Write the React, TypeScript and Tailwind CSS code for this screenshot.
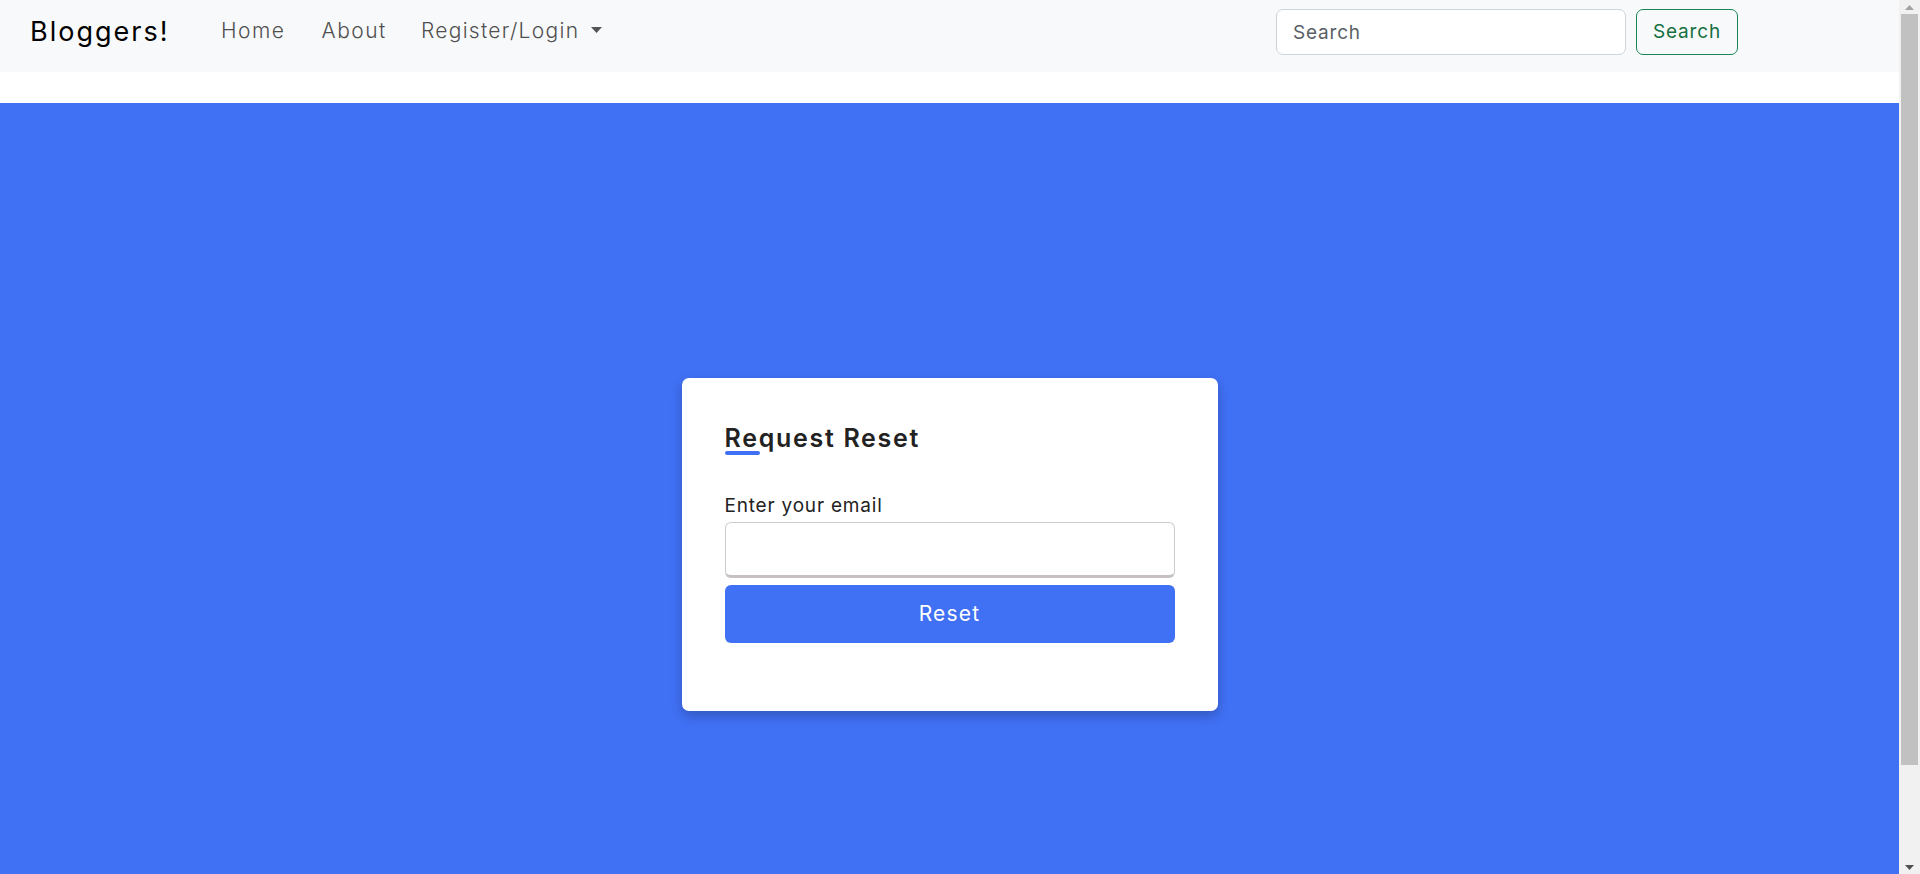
import { useState } from 'react';

function NavBar() {
  const [query, setQuery] = useState('');

  return (
    <nav className="flex items-start h-[72px] shrink-0 bg-[#f8f9fa] pl-[30px] pr-[161px]">
      {/* Brand */}
      <a href="#" className="w-[191px] mt-[18px] text-[27px] leading-none text-black tracking-[2px]">
        Bloggers!
      </a>

      {/* Links */}
      <div className="flex items-start mt-[20px] text-[21px] leading-none font-light text-[#505050] tracking-[1.5px]">
        <a href="#" className="hover:text-black">Home</a>
        <a href="#" className="ml-[36px] hover:text-black">About</a>
        <button className="ml-[34px] flex items-start gap-[12px] hover:text-black tracking-[1.3px]">
          Register/Login
          <svg className="w-[11px] h-[6px] mt-[7px]" viewBox="0 0 11 6" fill="#555">
            <path d="M0 0h11L5.5 6z" />
          </svg>
        </button>
      </div>

      {/* Search */}
      <form className="ml-auto flex gap-[10px] mt-[9px]" onSubmit={(e) => e.preventDefault()}>
        <input
          type="search"
          value={query}
          onChange={(e) => setQuery(e.target.value)}
          placeholder="Search"
          className="w-[350px] h-[46px] rounded-[7px] border border-[#ced4da] bg-white px-[16px] text-[19px] tracking-[0.8px] text-[#212529] placeholder:text-[#5a5f66] outline-none"
        />
        <button className="w-[102px] h-[46px] rounded-[7px] border border-[#198754] text-[19px] tracking-[0.8px] text-[#15703f] hover:bg-[#198754] hover:text-white">
          Search
        </button>
      </form>
    </nav>
  );
}

function ResetCard() {
  const [email, setEmail] = useState('');

  return (
    <div className="w-[536px] bg-white rounded-[7px] shadow-[0_5px_12px_rgba(0,0,0,0.22)] px-[43px] pt-[48px] pb-[68px]">
      <h2 className="text-[25px] leading-none font-semibold text-[#222] tracking-[1.7px]">
        Request Reset
      </h2>
      <div className="w-[35px] h-[4px] rounded-full bg-[#4070f4]" />

      <form className="mt-[41px]" onSubmit={(e) => e.preventDefault()}>
        <label className="block text-[19px] leading-none text-[#222] tracking-[0.8px]">Enter your email</label>
        <input
          type="email"
          value={email}
          onChange={(e) => setEmail(e.target.value)}
          className="mt-[7px] block w-full h-[56px] rounded-[6px] border border-[#ccc] border-b-[3px] border-b-[#c7c0c0] px-[15px] text-[18px] outline-none"
        />
        <button className="mt-[7px] w-full h-[58px] rounded-[6px] bg-[#4070f4] text-white text-[21px] tracking-[1.2px] hover:bg-[#265df2]">
          Reset
        </button>
      </form>
    </div>
  );
}

function Scrollbar() {
  return (
    <div className="w-[21px] shrink-0 flex flex-col bg-[#f1f1f1]">
      <div className="h-[14px] flex items-center justify-center">
        <svg className="w-[9px] h-[5px]" viewBox="0 0 9 5" fill="#a3a3a3">
          <path d="M4.5 0L9 5H0z" />
        </svg>
      </div>
      <div className="mx-[2px] h-[751px] bg-[#c1c1c1]" />
      <div className="flex-1" />
      <div className="h-[14px] flex items-center justify-center">
        <svg className="w-[9px] h-[5px]" viewBox="0 0 9 5" fill="#505050">
          <path d="M0 0h9L4.5 5z" />
        </svg>
      </div>
    </div>
  );
}

export default function App() {
  return (
    <div className="flex h-[874px] overflow-hidden font-['Inter',sans-serif]">
      <div className="flex-1 flex flex-col min-w-0">
        <NavBar />
        <div className="h-[31px] shrink-0 bg-white" />
        <main className="h-[883px] shrink-0 bg-[#4070f4] flex items-center justify-center">
          <ResetCard />
        </main>
      </div>
      <Scrollbar />
    </div>
  );
}
